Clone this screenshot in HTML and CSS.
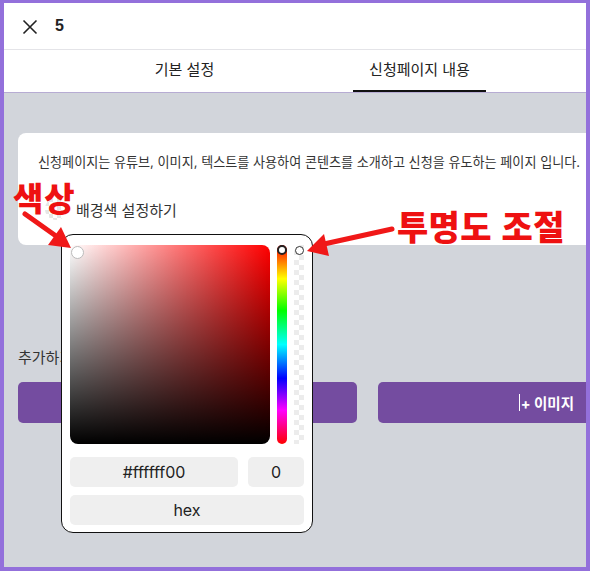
FILE: index.html
```html
<!DOCTYPE html>
<html lang="ko">
<head>
<meta charset="utf-8">
<link rel="stylesheet" href="styles.css">
</head>
<body>
<div class="frame">
  <header class="header">
    <svg class="close" width="16" height="16" viewBox="0 0 16 16"><path d="M1.5 1.5 L14.5 14.5 M14.5 1.5 L1.5 14.5" stroke="#222" stroke-width="1.6" fill="none"/></svg>
    <span class="num">5</span>
  </header>
  <nav class="tabs">
    <div class="tab">기본 설정</div>
    <div class="tab active">신청페이지 내용</div>
  </nav>
  <main class="content">
    <section class="card">
      <p class="desc">신청페이지는 유튜브, 이미지, 텍스트를 사용하여 콘텐츠를 소개하고 신청을 유도하는 페이지 입니다.</p>
      <div class="bgrow"><span class="swatch"></span><span>배경색 설정하기</span></div>
    </section>
    <p class="addlabel">추가하기</p>
    <div class="btnrow">
      <div class="btn"></div>
      <div class="btn btn-img"><span class="caret"></span>+ 이미지</div>
    </div>
  </main>

  <div class="picker">
    <div class="pk-top">
      <div class="sat"><span class="sat-handle"></span></div>
      <div class="hue"><span class="bar-handle"></span></div>
      <div class="alpha"><span class="alpha-handle"></span></div>
    </div>
    <div class="pk-inputs">
      <div class="field hexval">#ffffff00</div>
      <div class="field aval">0</div>
    </div>
    <div class="field mode">hex</div>
  </div>

  <div class="note note-color">색상</div>
  <div class="note note-alpha">투명도 조절</div>
  <svg class="arrows" width="590" height="571" viewBox="0 0 590 571">
    <path d="M25 214 L56 236" stroke="#f01818" stroke-width="5" stroke-linecap="round"/>
    <polygon points="71,248 48,245 61,227" fill="#f01818"/>
    <path d="M392 229 L324 244" stroke="#f01818" stroke-width="5" stroke-linecap="round"/>
    <polygon points="307,251 324,234 329,256" fill="#f01818"/>
  </svg>
</div>
</body>
</html>
```
FILE: styles.css
```css
* { box-sizing: border-box; }
html, body { margin: 0; padding: 0; }
body {
  font-family: Inter, "Noto Sans CJK KR", sans-serif;
  color: #222;
}
.frame {
  position: relative;
  width: 590px;
  height: 571px;
  border: 4px solid #9370db;
  border-top-width: 3px;
  background: #d2d5db;
  overflow: hidden;
  display: flex;
  flex-direction: column;
}
.header {
  height: 46px;
  background: #fff;
  display: flex;
  align-items: center;
  padding-left: 18px;
  gap: 17px;
  flex: none;
}
.close { display: block; margin-top: 1px; }
.num { font-weight: 700; font-size: 16px; font-family: "Liberation Sans", Arial, sans-serif; }
.tabs {
  flex: none;
  height: 44px;
  background: #fff;
  border-top: 1px solid #e4e4e8;
  display: flex;
  padding-left: 114px;
  gap: 102px;
  border-bottom: 1px solid #b7acd3;
}
.tab {
  width: 133px;
  text-align: center;
  font-size: 15px;
  line-height: 40px;
  color: #222;
}
.tab.active { border-bottom: 2px solid #111; }
.content {
  flex: 1;
  padding: 40px 0 0 14px;
}
.card {
  background: #fff;
  border-radius: 8px 0 0 8px;
  height: 112px;
  padding: 18px 0 0 20px;
}
.desc {
  margin: 0;
  font-size: 13.1px;
  line-height: 22px;
  color: #333;
  white-space: nowrap;
}
.bgrow {
  display: flex;
  align-items: center;
  gap: 9px;
  margin-top: 25px;
  margin-left: 7px;
  font-size: 15px;
  color: #333;
}
.swatch {
  width: 22px; height: 22px;
  border-radius: 50%;
  background-color: #fff;
  background-image:
    linear-gradient(45deg, #e6e6e6 25%, transparent 25%, transparent 75%, #e6e6e6 75%),
    linear-gradient(45deg, #e6e6e6 25%, transparent 25%, transparent 75%, #e6e6e6 75%);
  background-size: 8px 8px;
  background-position: 0 0, 4px 4px;
}
.addlabel {
  margin: 101px 0 0 0;
  font-size: 15px;
  line-height: 24px;
  color: #333;
}
.btnrow {
  display: flex;
  gap: 21px;
  margin-top: 12px;
}
.btn {
  height: 41px;
  background: #744ca0;
  border-radius: 5px;
}
.btn:first-child { width: 339px; }
.btn-img {
  flex: 1;
  border-radius: 5px 0 0 5px;
  color: #fff;
  font-size: 14.5px;
  font-weight: 700;
  display: flex;
  align-items: center;
  justify-content: flex-end;
  padding-right: 12px;
}
.caret {
  display: inline-block;
  width: 1px;
  height: 17px;
  background: #fff;
  margin-right: 1px;
}

/* color picker */
.picker {
  position: absolute;
  left: 57px;
  top: 231px;
  width: 252px;
  height: 299px;
  background: #fff;
  border: 1px solid #111;
  border-radius: 12px;
  padding: 10px 8px 0 8px;
  display: flex;
  flex-direction: column;
}
.pk-top { display: flex; height: 199px; }
.sat {
  position: relative;
  width: 200px;
  height: 199px;
  border-radius: 3px 8px 8px 8px;
  background:
    linear-gradient(to bottom, rgba(0,0,0,0), #000),
    linear-gradient(to right, #fff, rgba(255,255,255,0)),
    #ff0000;
}
.sat-handle {
  position: absolute;
  left: 1px; top: 1px;
  width: 13px; height: 13px;
  border-radius: 50%;
  background: #fff;
  border: 1px solid #bbb;
}
.hue {
  position: relative;
  margin-left: 7px;
  width: 10px;
  height: 199px;
  border-radius: 5px;
  background: linear-gradient(to bottom, #ff0000 0%, #ffff00 17%, #00ff00 33%, #00ffff 50%, #0000ff 67%, #ff00ff 83%, #ff0000 100%);
}
.bar-handle {
  position: absolute;
  left: 0; top: 0;
  width: 10px; height: 10px;
  border-radius: 50%;
  background: #fff;
  border: 2.5px solid #222;
}
.alpha {
  position: relative;
  margin-left: 7px;
  width: 10px;
  height: 199px;
  background-color: #fff;
  background-image:
    linear-gradient(45deg, #ececec 25%, transparent 25%, transparent 75%, #ececec 75%),
    linear-gradient(45deg, #ececec 25%, transparent 25%, transparent 75%, #ececec 75%);
  background-size: 10px 10px;
  background-position: 0 0, 5px 5px;
}
.alpha-handle {
  position: absolute;
  left: 0.5px; top: 0.5px;
  width: 9px; height: 9px;
  border-radius: 50%;
  background: #fff;
  border: 1.5px solid #333;
}
.pk-inputs {
  display: flex;
  gap: 10px;
  margin-top: 13px;
}
.field {
  height: 30px;
  background: #efefef;
  border-radius: 5px;
  font-family: Inter, "Liberation Sans", sans-serif;
  font-size: 16px;
  line-height: 30px;
  text-align: center;
  color: #222;
}
.hexval { width: 168px; }
.aval { width: 56px; }
.mode { margin-top: 8px; width: 234px; }

/* annotations */
.note {
  position: absolute;
  color: #ee1111;
  font-family: "Noto Sans CJK KR", sans-serif;
  font-weight: 900;
  font-size: 33px;
  line-height: 40px;
}
.note-color { left: 9px; top: 174px; letter-spacing: 1px; }
.note-alpha { left: 393px; top: 203px; font-size: 34px; letter-spacing: 0.3px; }
.arrows { position: absolute; left: -4px; top: -3px; pointer-events: none; }
```
